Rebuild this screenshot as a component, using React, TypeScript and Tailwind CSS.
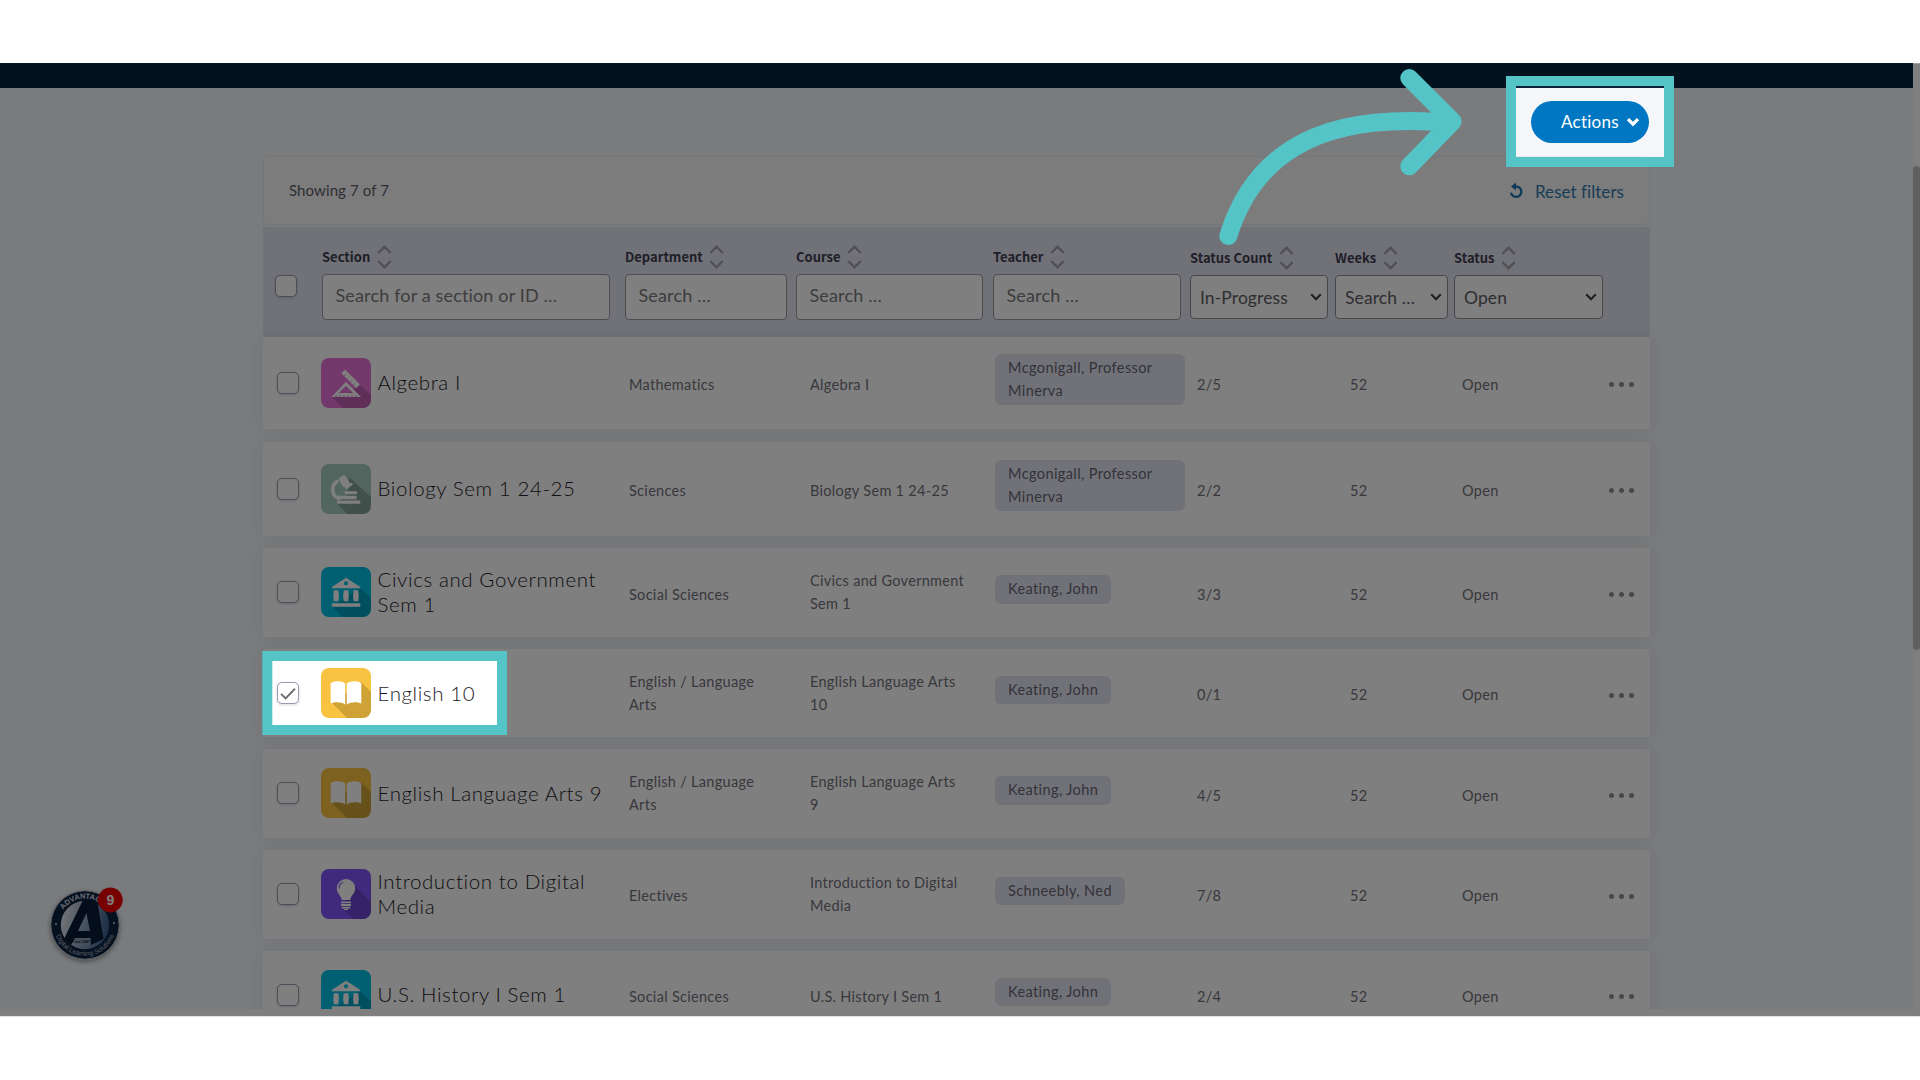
import type { ReactNode } from 'react'
import { clsx } from 'clsx'

type Subject = 'math' | 'science' | 'social' | 'english' | 'elective'

interface Section {
  id: number
  name: string
  subject: Subject
  department: string
  course: string
  teacher: string
  count: string
  height: string
  checked?: boolean
}

const SECTIONS: Section[] = [
  { id: 1, name: 'Algebra I', subject: 'math', department: 'Mathematics', course: 'Algebra I', teacher: 'Mcgonigall, Professor Minerva', count: '2/5', height: 'h-[92px] mb-px' },
  { id: 2, name: 'Biology Sem 1 24-25', subject: 'science', department: 'Sciences', course: 'Biology Sem 1 24-25', teacher: 'Mcgonigall, Professor Minerva', count: '2/2', height: 'h-[94px]' },
  { id: 3, name: 'Civics and Government Sem 1', subject: 'social', department: 'Social Sciences', course: 'Civics and Government Sem 1', teacher: 'Keating, John', count: '3/3', height: 'h-[89.5px]' },
  { id: 4, name: 'English 10', subject: 'english', department: 'English / Language Arts', course: 'English Language Arts 10', teacher: 'Keating, John', count: '0/1', height: 'h-[88px]', checked: true },
  { id: 5, name: 'English Language Arts 9', subject: 'english', department: 'English / Language Arts', course: 'English Language Arts 9', teacher: 'Keating, John', count: '4/5', height: 'h-[88.5px]' },
  { id: 6, name: 'Introduction to Digital Media', subject: 'elective', department: 'Electives', course: 'Introduction to Digital Media', teacher: 'Schneebly, Ned', count: '7/8', height: 'h-[89px]' },
  { id: 7, name: 'U.S. History I Sem 1', subject: 'social', department: 'Social Sciences', course: 'U.S. History I Sem 1', teacher: 'Keating, John', count: '2/4', height: 'h-[88.5px]' },
]

const GLYPHS: Record<Subject, { bg: string; glyph: ReactNode }> = {
  math: {
    bg: '#e670d8',
    glyph: (
      <>
        <path d="M11 39L22 50H50V37L38 26L30 34Z" fill="#000" opacity=".17" />
        <path d="M20.3 15.3L24 11.6L39 26.4L35.2 30.2Z" fill="#fff" />
        <path d="M23 18l1.5-1.5M26 21l1.5-1.5M29 24l1.5-1.5M32 27l1.5-1.5" stroke="#e670d8" strokeWidth="0.8" />
        <path fillRule="evenodd" d="M10.5 39L25 23.7L40 39ZM17.6 35H32L25 27.8Z" fill="#fff" />
        <path d="M15 39v-2M19 39v-2M23 39v-2M27 39v-2M31 39v-2M35 39v-2" stroke="#e670d8" strokeWidth="0.9" />
      </>
    ),
  },
  science: {
    bg: '#a6cabe',
    glyph: (
      <>
        <path d="M16 39.5L26.5 50H50V33L28 13L27 30Z" fill="#000" opacity=".2" />
        <path d="M16 17.5C10.5 21 9.5 31 17.5 34.5" fill="none" stroke="#fff" strokeWidth="3.6" strokeLinecap="round" />
        <rect x="19.5" y="11.8" width="7.6" height="11" rx="1.6" transform="rotate(-32 23.3 17.3)" fill="#fff" />
        <path d="M25.4 23.6L30.4 20.2" stroke="#fff" strokeWidth="2.6" strokeLinecap="round" />
        <rect x="23.5" y="27.2" width="12.5" height="3" rx="1" fill="#fff" />
        <path d="M14.5 31.8h21v3.4h-18z" fill="#fff" />
        <rect x="16" y="36.6" width="23.3" height="3.2" rx="1" fill="#fff" />
      </>
    ),
  },
  social: {
    bg: '#00c0e2',
    glyph: (
      <>
        <path d="M11 39.5L21.5 50H50V31L39 21Z" fill="#000" opacity=".17" />
        <path fillRule="evenodd" d="M25 10.8L39.3 20v1.2H10.8V20ZM25 14.2a2.1 2.1 0 1 0 0 4.2a2.1 2.1 0 0 0 0-4.2Z" fill="#fff" />
        <path d="M12.8 23.3h4.6q1 5.5 0 11h-4.6q-1-5.5 0-11ZM22.7 23.3h4.6q1 5.5 0 11h-4.6q-1-5.5 0-11ZM32.6 23.3h4.6q1 5.5 0 11h-4.6q-1-5.5 0-11Z" fill="#fff" />
        <rect x="10.8" y="36.2" width="28.5" height="3.5" rx=".5" fill="#fff" />
      </>
    ),
  },
  english: {
    bg: '#f9c342',
    glyph: (
      <>
        <path d="M11 35L26 50H50V24L40 14Z" fill="#000" opacity=".17" />
        <path d="M24.2 15.4C21 12.8 13 12.6 9.7 15.2V35.6C14 33.6 20.5 33.8 24.2 36.6ZM25.8 15.4C29 12.8 37 12.6 40.3 15.2V35.6C36 33.6 29.5 33.8 25.8 36.6Z" fill="#fff" />
      </>
    ),
  },
  elective: {
    bg: '#8054f8',
    glyph: (
      <>
        <path d="M21 39L32 50H50V33L33.5 16.5Z" fill="#000" opacity=".17" />
        <path d="M20.8 31C20.3 26.5 15.8 24.8 15.8 19.2a9.2 9.2 0 0 1 18.4 0c0 5.6-4.5 7.3-5 11.8Z" fill="#fff" />
        <path d="M18 19.5c0-3.2 1.6-5.4 4.2-6.2" fill="none" stroke="#8054f8" strokeWidth="1.1" />
        <path d="M20.7 33.3h8.6M20.7 36h8.6M21.5 38.6h7" stroke="#fff" strokeWidth="1.8" strokeLinecap="round" />
        <path d="M23 40.3h4" stroke="#fff" strokeWidth="1.2" />
      </>
    ),
  },
}

function SubjectIcon({ subject }: { subject: Subject }) {
  const { bg, glyph } = GLYPHS[subject]
  return (
    <svg viewBox="0 0 50 50" className="size-[50px] shrink-0 rounded-[8px]">
      <rect width="50" height="50" fill={bg} />
      {glyph}
    </svg>
  )
}

function Checkbox({ checked = false }: { checked?: boolean }) {
  return (
    <span className="flex size-[22px] items-center justify-center rounded-[5px] border-[1.5px] border-[#9a98b2] bg-white shadow-[0_1px_3px_rgba(50,50,93,0.2)]">
      {checked && (
        <svg viewBox="0 0 16 13" className="h-[13px] w-4">
          <path d="M1 6.8L5.6 11.4L15 1.6" fill="none" stroke="#6b6b6b" strokeWidth="1.9" />
        </svg>
      )}
    </span>
  )
}

function SortLabel({ children }: { children: ReactNode }) {
  return (
    <div className="flex h-6 items-center gap-[6.5px] font-['Noto_Sans_CJK_SC','Noto_Sans',sans-serif] text-[13px] font-bold whitespace-nowrap text-[#3f3d52]">
      {children}
      <svg viewBox="0 0 15 24" className="h-6 w-[15px]">
        <path d="M1.2 8L7.5 1.8L13.8 8M1.2 16L7.5 22.2L13.8 16" fill="none" stroke="#a3a3ab" strokeWidth="2.4" />
      </svg>
    </div>
  )
}

function FilterInput({ label, placeholder, width }: { label: string; placeholder: string; width: string }) {
  return (
    <div className="pt-[17.5px]">
      <SortLabel>{label}</SortLabel>
      <div className={clsx('mt-[5.5px] flex h-[45.5px] items-center rounded-[4px] border border-[#9b9ba3] bg-white pl-[12.5px] text-[18px] tracking-[0.15px] text-[#7a7a7a]', width)}>
        <span className="-mt-0.5 whitespace-nowrap">{placeholder}</span>
      </div>
    </div>
  )
}

function FilterSelect({ label, value, width }: { label: string; value: string; width: string }) {
  return (
    <div className="pt-[18.5px]">
      <SortLabel>{label}</SortLabel>
      <div className={clsx('mt-[5.5px] flex h-[43.5px] items-center justify-between rounded-[4px] border border-[#8f8f97] bg-white pr-[5px] pl-[9px] text-[17.5px] tracking-[0.1px] text-[#5c5c64]', width)}>
        <span className="pt-[3px] whitespace-nowrap">{value}</span>
        <svg viewBox="0 0 12 8" className="h-2 w-3">
          <path d="M1.2 1.2L6 6.2L10.8 1.2" fill="none" stroke="#3f3f46" strokeWidth="2.1" />
        </svg>
      </div>
    </div>
  )
}

function TextCell({ children }: { children: string }) {
  // long labels wrap onto two lines and sit slightly higher
  return <div className={clsx('max-w-[156px]', children.length > 20 ? 'pt-px' : 'pt-[5px]')}>{children}</div>
}

function SectionRow({ section }: { section: Section }) {
  return (
    <div className={clsx('grid shrink-0 grid-cols-[58px_308px_181px_185px_202px_153px_112px_147px_1fr] items-center bg-white text-[14.5px] leading-[22.5px] tracking-[0.3px] text-[#72707b] shadow-[0_0_14px_rgba(50,50,93,0.09)]', section.height)}>
      <div className="pl-3.5">
        <Checkbox checked={section.checked} />
      </div>
      <div className="flex items-center gap-[6.5px] pr-4">
        <SubjectIcon subject={section.subject} />
        <span className="text-[20.5px] leading-[25px] font-light tracking-[0.6px] text-[#1c1a26]">{section.name}</span>
      </div>
      <TextCell>{section.department}</TextCell>
      <TextCell>{section.course}</TextCell>
      <div className="pb-[6px]">
        <span className="inline-block max-w-[190px] rounded-[6px] bg-[#e2e4f0] px-[13px] py-[3px] align-middle tracking-[0.4px] text-[#676573]">{section.teacher}</span>
      </div>
      <TextCell>{section.count}</TextCell>
      <TextCell>52</TextCell>
      <TextCell>Open</TextCell>
      <div className="flex gap-[5px] pt-[4px]">
        <i className="size-[5px] rounded-full bg-[#8f8f94]" />
        <i className="size-[5px] rounded-full bg-[#8f8f94]" />
        <i className="size-[5px] rounded-full bg-[#8f8f94]" />
      </div>
    </div>
  )
}

function ChatBadge() {
  return (
    <svg viewBox="0 0 80 80" className="absolute left-[47px] top-[885px] size-20">
      <defs>
        <linearGradient id="disc" x1="0" y1="0.4" x2="1" y2="0.6">
          <stop offset="0" stopColor="#e3e8ee" />
          <stop offset="0.5" stopColor="#8fa4bf" />
          <stop offset="1" stopColor="#365a8c" />
        </linearGradient>
        <path id="ring-top" d="M11.5 40A26.5 26.5 0 0 1 64.5 40" />
        <path id="ring-bottom" d="M7.2 40A30.8 30.8 0 0 0 68.8 40" />
        <filter id="lift" x="-20%" y="-20%" width="140%" height="150%">
          <feDropShadow dx="0" dy="2" stdDeviation="2.5" floodOpacity="0.4" />
        </filter>
      </defs>
      <circle cx="38" cy="40" r="34.2" fill="#0a2440" stroke="#b9c1ca" strokeWidth="1" filter="url(#lift)" />
      <circle cx="38" cy="40" r="24.2" fill="url(#disc)" />
      <path fillRule="evenodd" d="M36 15H50L56.5 54L44 60L43.4 53H29L24 60L17 54ZM39.5 28L31 46H43Z" fill="#061c34" />
      <rect x="27.5" y="53" width="16" height="6.5" fill="#8fa0b4" />
      <text x="35.5" y="57.6" textAnchor="middle" className="fill-[#0a2440] font-['Liberation_Sans',sans-serif] text-[4px] font-bold">est.1987</text>
      <text className="fill-[#d9dde2] font-['Liberation_Sans',sans-serif] text-[7.4px] font-bold">
        <textPath href="#ring-top" startOffset="50%" textAnchor="middle">ADVANTAGES</textPath>
      </text>
      <text className="fill-[#aeb8c4] font-['Liberation_Sans',sans-serif] text-[6.6px]">
        <textPath href="#ring-bottom" startOffset="50%" textAnchor="middle">Digital Learning Solutions</textPath>
      </text>
      <circle cx="9" cy="39" r="1" fill="#cdd5de" />
      <circle cx="67" cy="38" r="1" fill="#cdd5de" />
      <circle cx="63.3" cy="15" r="12.4" fill="#ee0000" />
      <text x="63.3" y="20" textAnchor="middle" className="fill-white font-['Liberation_Sans',sans-serif] text-[14px] font-bold">9</text>
    </svg>
  )
}

// Dims the whole page except the two highlighted cut-outs, then draws the frames and the arrow.
function Spotlight() {
  return (
    <svg viewBox="0 0 1920 1080" className="pointer-events-none absolute inset-0 h-[1080px] w-[1920px]">
      <path fillRule="evenodd" d="M0 63.3H1920V1016.3H0ZM1511 81H1669V162H1511ZM267 656H502V730H267Z" fill="#000" fillOpacity=".5" />
      <rect x="1511" y="81" width="158" height="81" fill="none" stroke="#55c4c7" strokeWidth="10" />
      <rect x="267.3" y="656" width="234.7" height="74" fill="none" stroke="#55c4c7" strokeWidth="10" />
      <path d="M1228.3 236C1252 160 1311 114 1436 122M1409.3 78L1452.6 121.4L1409.3 166.2" fill="none" stroke="#55c4c7" strokeWidth="18" strokeLinecap="round" strokeLinejoin="round" />
    </svg>
  )
}

export default function App() {
  return (
    <div className="relative h-[1080px] w-[1920px] overflow-hidden bg-white pt-[63px] font-['Lato','Open_Sans',sans-serif] [font-variant-ligatures:none]">
      <div className="flex h-[953px] bg-white">
        <div className="h-[946px] flex-1 overflow-hidden bg-[#f4f6fa]">
          <div className="h-[24.5px] bg-[#08223c]" />
          <main className="ml-[263px] w-[1387px]">
            <div className="flex justify-end pt-[13.5px] pr-px">
              <button className="flex h-[42px] w-[118px] items-center gap-[7px] rounded-full bg-[#0077c2] pl-[30px] text-[17px] tracking-[0.25px] text-white">
                Actions
                <svg viewBox="0 0 14 10" className="h-2.5 w-3.5 shrink-0">
                  <path d="M2 2.2L7 7.2L12 2.2" fill="none" stroke="#fff" strokeWidth="3.2" />
                </svg>
              </button>
            </div>

            <div className="mt-[12.5px] flex h-[69px] items-center justify-between rounded-[6px] border border-[#e8eaf0] bg-[#f8f9fb] pr-[25px] pl-[25px]">
              <span className="pt-px text-[15px] tracking-[0.1px] text-[#5e5c67]">Showing 7 of 7</span>
              <span className="flex items-center gap-[11px] text-[17px] text-[#3578ab]">
                <svg viewBox="0 0 15 17" className="h-[17px] w-[15px]">
                  <path d="M6 4.6H8.2A5.2 5.2 0 1 1 2 10.8" fill="none" stroke="#1d74b0" strokeWidth="2.4" />
                  <path d="M7 0.4V8.6L2 4.5Z" fill="#1d74b0" />
                </svg>
                <span className="pt-[3px] tracking-[0.05px]">Reset filters</span>
              </span>
            </div>

            <div className="mt-[2.5px] grid h-[109.5px] grid-cols-[59px_303px_171px_197px_197px_145px_119px_1fr] bg-[#e2e4f0]">
              <div className="pt-12 pl-3">
                <Checkbox />
              </div>
              <FilterInput label="Section" placeholder="Search for a section or ID …" width="w-[288px]" />
              <FilterInput label="Department" placeholder="Search …" width="w-[162px]" />
              <FilterInput label="Course" placeholder="Search …" width="w-[187px]" />
              <FilterInput label="Teacher" placeholder="Search …" width="w-[188px]" />
              <FilterSelect label="Status Count" value="In-Progress" width="w-[138px]" />
              <FilterSelect label="Weeks" value="Search …" width="w-[113px]" />
              <FilterSelect label="Status" value="Open" width="w-[149px]" />
            </div>

            <div className="flex flex-col gap-3">
              {SECTIONS.map(s => <SectionRow key={s.id} section={s} />)}
            </div>
          </main>
        </div>
        <div className="w-[7px] bg-white pt-[103px]">
          <div className="h-[484px] rounded-full bg-[#c1c1c1]" />
        </div>
      </div>
      <ChatBadge />
      <Spotlight />
    </div>
  )
}
